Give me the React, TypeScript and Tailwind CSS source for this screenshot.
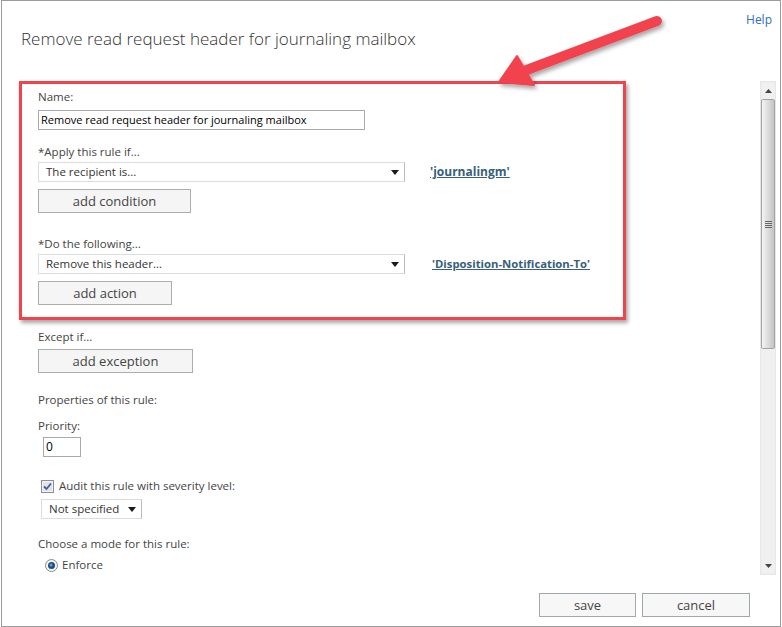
import React from "react";

const font = { fontFamily: '"Open Sans", "Noto Sans", sans-serif' };

function Caret() {
  return (
    <svg width="8" height="5" viewBox="0 0 8 5" className="shrink-0">
      <path d="M0 0 H8 L4 5 Z" fill="#1a1a1a" />
    </svg>
  );
}

function Select({ label, width }: { label: string; width: string }) {
  return (
    <div className={`${width} h-[20px] flex items-center justify-between pl-[7px] pr-[5px] border border-[#dcdcdc] border-r-[#bdbdbd] bg-white text-[11.5px] text-[#333]`}>
      <span>{label}</span>
      <Caret />
    </div>
  );
}

function Btn({ label, width }: { label: string; width: string }) {
  return (
    <div className={`${width} h-[24px] pt-[2px] flex items-center justify-center border border-[#adadad] bg-[#f5f5f5] text-[13px] text-[#444]`}>
      {label}
    </div>
  );
}

function Label({ children, className = "" }: { children: React.ReactNode; className?: string }) {
  return <div className={`h-[16px] leading-[16px] text-[11.5px] text-[#444] ${className}`}>{children}</div>;
}

function Scrollbar() {
  return (
    <div className="w-[16px] h-[494px] mr-[4px] bg-[#f0f0f0] border border-[#e6e6e6] flex flex-col items-center">
      <div className="h-[17px] w-full flex items-center justify-center">
        <svg width="7" height="4" viewBox="0 0 7 4"><path d="M0 4 L3.5 0 L7 4 Z" fill="#444" /></svg>
      </div>
      <div className="w-[14px] h-[250px] rounded-[2px] border border-[#a3a3a3] bg-gradient-to-r from-[#f4f4f4] via-[#dcdcdc] to-[#c4c4c4] flex items-center justify-center">
        <div className="flex flex-col gap-[1px]">
          <div className="w-[7px] h-[1px] bg-[#666]" />
          <div className="w-[7px] h-[1px] bg-[#666]" />
          <div className="w-[7px] h-[1px] bg-[#666]" />
          <div className="w-[7px] h-[1px] bg-[#666]" />
        </div>
      </div>
      <div className="flex-1" />
      <div className="h-[17px] w-full flex items-center justify-center">
        <svg width="7" height="4" viewBox="0 0 7 4"><path d="M0 0 L7 0 L3.5 4 Z" fill="#444" /></svg>
      </div>
    </div>
  );
}

export default function App() {
  return (
    <div className="w-[782px] h-[627px] bg-white" style={font}>
      <div className="relative ml-[1px] w-[780px] h-[627px] border border-[#9c9c9c] flex flex-col overflow-hidden">
        {/* header */}
        <div className="h-[80px] shrink-0 flex justify-between">
          <h1 className="pl-[19px] pt-[26px] text-[17px] leading-[24px] font-light text-[#333]">
            Remove read request header for journaling mailbox
          </h1>
          <a className="pr-[8px] pt-[11px] text-[12px] leading-[16px] text-[#2d6fc6]">Help</a>
        </div>

        {/* body */}
        <div className="h-[496px] shrink-0 flex">
          <div className="flex-1 pl-[36px] pt-[8px] flex flex-col items-start">
            <Label>Name:</Label>
            <div className="mt-[5px] w-[327px] h-[20px] border border-[#a9a9a9] px-[2px] flex items-center text-[11px] text-black">
              Remove read request header for journaling mailbox
            </div>

            <Label className="mt-[14px]">*Apply this rule if...</Label>
            <div className="mt-[2px] flex items-center">
              <Select label="The recipient is..." width="w-[367px]" />
              <a className="ml-[25px] text-[12px] font-bold text-[#38607a] underline">'journalingm'</a>
            </div>
            <div className="mt-[7px]"><Btn label="add condition" width="w-[153px]" /></div>

            <Label className="mt-[23px]">*Do the following...</Label>
            <div className="mt-[2px] flex items-center">
              <Select label="Remove this header..." width="w-[367px]" />
              <a className="ml-[27px] text-[11.3px] font-bold text-[#38607a] underline">'Disposition-Notification-To'</a>
            </div>
            <div className="mt-[7px]"><Btn label="add action" width="w-[134px]" /></div>

            <Label className="mt-[24px]">Except if...</Label>
            <div className="mt-[4px]"><Btn label="add exception" width="w-[155px]" /></div>

            <Label className="mt-[19px]">Properties of this rule:</Label>
            <Label className="mt-[10px]">Priority:</Label>
            <div className="mt-[3px] ml-[5px] w-[38px] h-[20px] border border-[#a9a9a9] px-[2px] flex items-center text-[12px] text-black">0</div>

            <div className="mt-[21px] ml-[3px] h-[16px] flex items-center gap-[5px]">
              <svg width="13" height="13" viewBox="0 0 13 13">
                <rect x="0.5" y="0.5" width="12" height="12" fill="#f2f2f2" stroke="#8f8f8f" />
                <rect x="2" y="2" width="9" height="9" fill="#e4e4e4" />
                <path d="M3 6.5 L5.5 9 L10 3.5" fill="none" stroke="#3e5ca8" strokeWidth="1.8" />
              </svg>
              <span className="text-[11.5px] text-[#444]">Audit this rule with severity level:</span>
            </div>
            <div className="mt-[5px] ml-[3px]"><Select label="Not specified" width="w-[101px]" /></div>

            <Label className="mt-[17px]">Choose a mode for this rule:</Label>
            <div className="mt-[5px] ml-[7px] h-[16px] flex items-center gap-[4px]">
              <svg width="13" height="13" viewBox="0 0 13 13">
                <circle cx="6.5" cy="6.5" r="6" fill="#f4f4f4" stroke="#8a8a8a" />
                <circle cx="6.5" cy="6.5" r="3.5" fill="#1b4f7a" />
                <circle cx="6" cy="6" r="1.6" fill="#4fa3e0" />
              </svg>
              <span className="text-[11.5px] text-[#444]">Enforce</span>
            </div>
          </div>
          <Scrollbar />
        </div>

        {/* footer */}
        <div className="flex justify-end gap-[6px] pr-[30px] pt-[16px]">
          <div className="w-[97px] h-[24px] pt-[2px] flex items-center justify-center border border-[#a0a8ab] bg-[#f7f7f7] text-[13px] text-[#444]">save</div>
          <div className="w-[108px] h-[24px] pt-[2px] flex items-center justify-center border border-[#a0a8ab] bg-[#f7f7f7] text-[13px] text-[#444]">cancel</div>
        </div>

        {/* annotation: red frame */}
        <div className="absolute left-[17px] top-[80px] w-[607px] h-[239px] border-[3px] border-[#f2434d] shadow-[2px_3px_4px_rgba(0,0,0,0.35)]" />

        {/* annotation: arrow */}
        <svg className="absolute left-0 top-0" width="780" height="120" viewBox="0 0 780 120">
          <defs>
            <filter id="sh" x="-10%" y="-10%" width="130%" height="150%">
              <feDropShadow dx="2" dy="3" stdDeviation="2" floodColor="#000" floodOpacity="0.35" />
            </filter>
          </defs>
          <g filter="url(#sh)" fill="#f2434d" stroke="#f2434d">
            <line x1="655" y1="20" x2="522" y2="70" strokeWidth="10" strokeLinecap="round" />
            <path d="M497 81 L515 55 L532 84 Z" strokeWidth="2" strokeLinejoin="round" />
          </g>
        </svg>
      </div>
    </div>
  );
}
